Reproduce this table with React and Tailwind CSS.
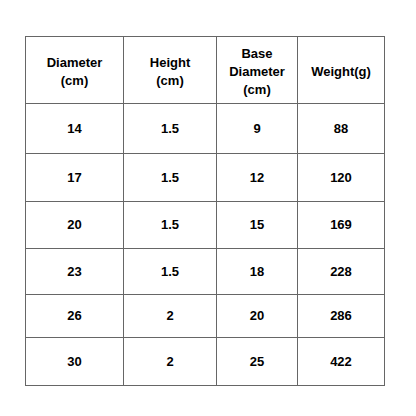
import React from "react";

const header = [
  ["Diameter", "(cm)"],
  ["Height", "(cm)"],
  ["Base", "Diameter", "(cm)"],
  ["Weight(g)"],
];

const rows = [
  ["14", "1.5", "9", "88"],
  ["17", "1.5", "12", "120"],
  ["20", "1.5", "15", "169"],
  ["23", "1.5", "18", "228"],
  ["26", "2", "20", "286"],
  ["30", "2", "25", "422"],
];

export default function App() {
  return (
    <div
      className="w-[416px] h-[416px] bg-white pt-[36px] pl-[25px]"
      style={{ fontFamily: '"Liberation Sans", Arial, sans-serif' }}
    >
      <div className="grid w-[360px] grid-cols-[97px_92px_80px_86px] grid-rows-[66px_49px_47px_46px_45px_42px_47px] gap-px bg-[#666666] p-px text-[13px] font-bold leading-[18px] text-black">
        {header.map((lines, i) => (
          <div key={"h" + i} className="flex flex-col items-center justify-center bg-white pt-[3px] text-center">
            {lines.map((l, j) => (
              <span key={j}>{l}</span>
            ))}
          </div>
        ))}
        {rows.map((r, ri) =>
          r.map((c, ci) => (
            <div key={ri + "-" + ci} className="flex items-center justify-center bg-white">
              {c}
            </div>
          ))
        )}
      </div>
    </div>
  );
}
